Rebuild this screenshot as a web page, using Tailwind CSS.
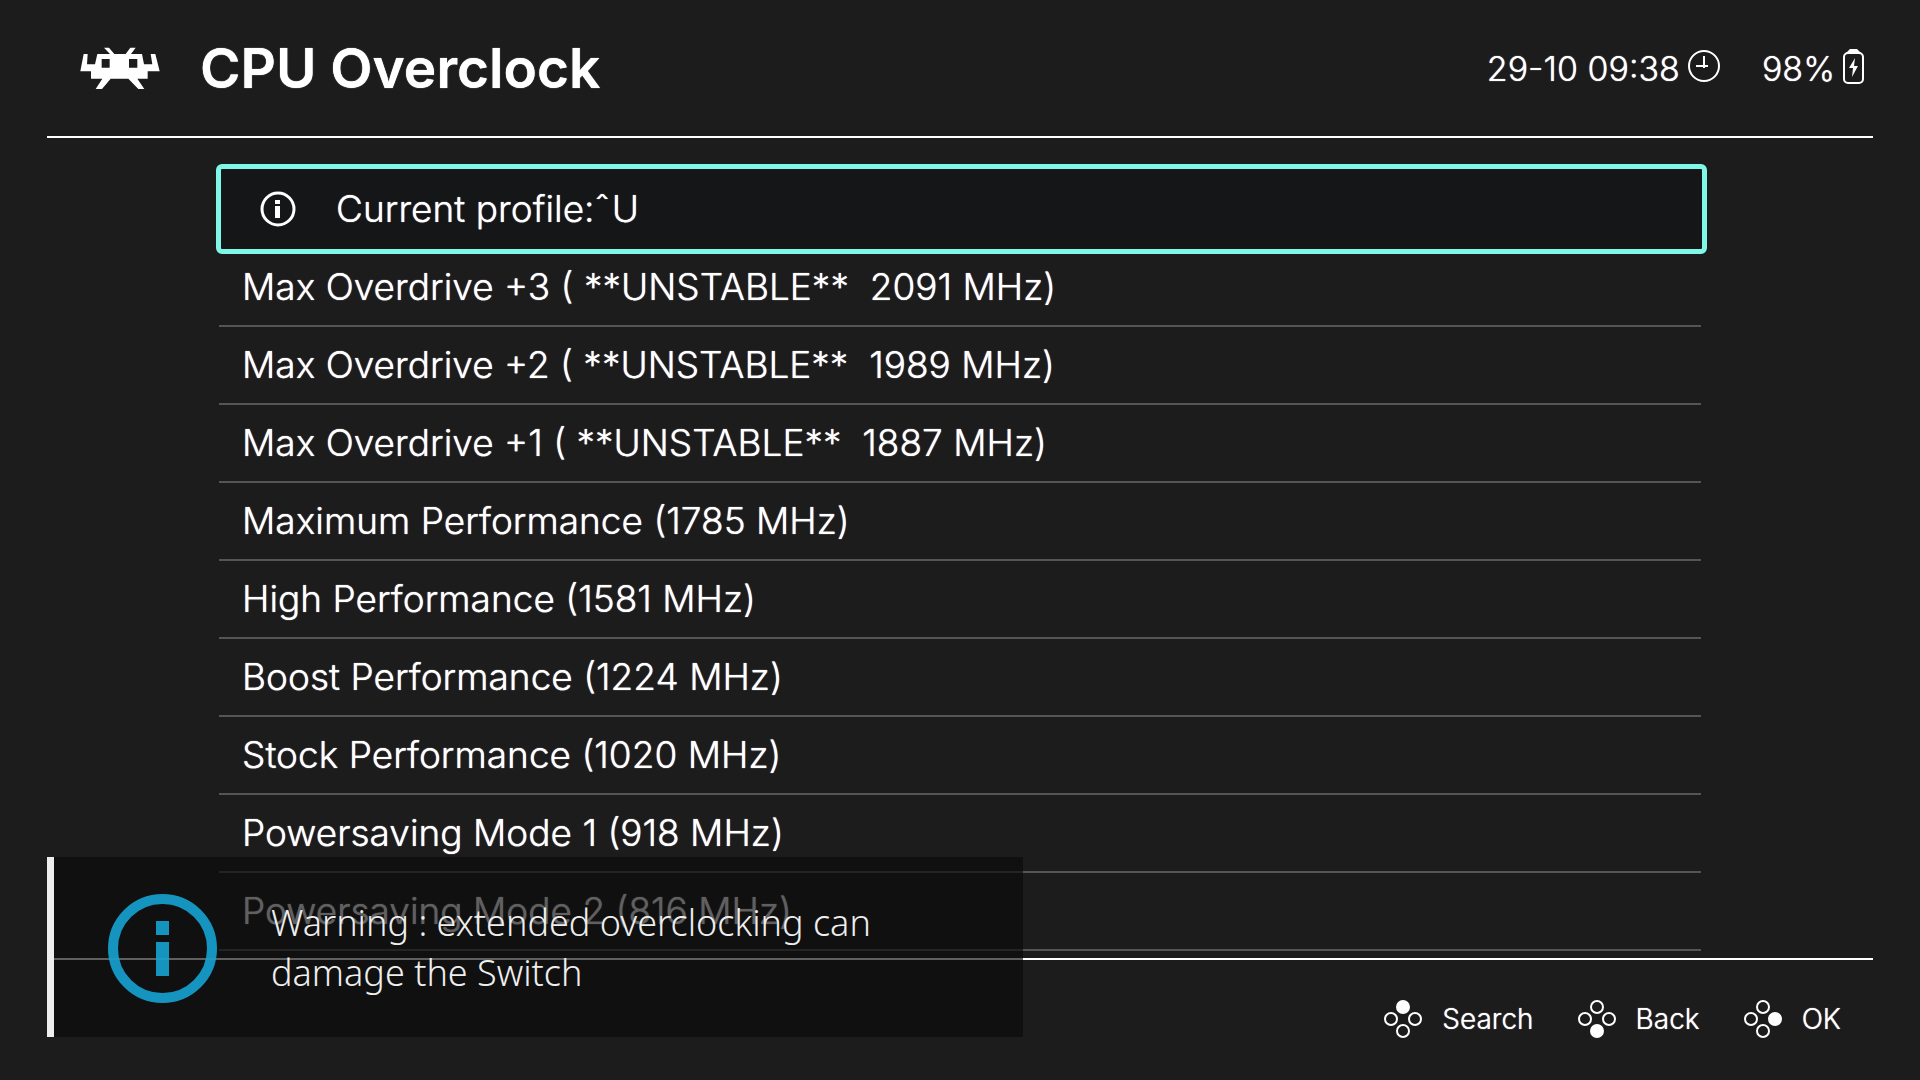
<!DOCTYPE html>
<html lang="en">
  <head>
    <meta charset="UTF-8" />
    <meta name="viewport" content="width=device-width, initial-scale=1.0" />
    <title>CPU Overclock</title>
    <script src="https://cdn.jsdelivr.net/npm/@tailwindcss/browser@4"></script>
  </head>
  <body class="bg-[#1c1c1c] font-['Inter',sans-serif] font-light text-white [text-shadow:0_0_1px_#fff] [&_button]:[text-shadow:inherit]">
    <div class="relative flex min-h-screen flex-col px-[47px]">
      <!-- Header -->
      <header class="flex h-[138px] items-center border-b-2 border-white pr-[9px] pl-[33px]">
        <svg class="h-[43px] w-20" viewBox="31 35 240 127" fill="#fff" fill-rule="evenodd" aria-hidden="true">
          <path d="M42 55H54L52 86H76L83 55H121L103 36H118L134 55H168L182 36H198L184 55H217L223 86H248L243 55H257L270 107H234V129H203L224 160H206L176 129H123L97 160H78L98 129H64V107H32ZM96 70V96H120V70ZM178 70V96H203V70Z" />
        </svg>
        <h1 class="ml-10 grow text-[55px] font-semibold">CPU Overclock</h1>
        <div class="flex items-center gap-2 text-[34px]">
          <span>29-10 09:38</span>
          <svg class="mb-1 size-8" viewBox="0 0 32 32" fill="none" stroke="#fff" stroke-width="2" aria-hidden="true">
            <circle cx="16" cy="16" r="15" />
            <path d="M16 6V18M8 16H20" />
          </svg>
          <span class="ml-[34px]">98%</span>
          <svg class="mb-1 h-9 w-[21px]" viewBox="0 0 21 36" aria-hidden="true">
            <path d="M3 5L7 1H14L18 5Z" fill="#fff" />
            <rect x="1" y="5" width="19" height="30" rx="4" fill="none" stroke="#fff" stroke-width="2" />
            <path d="M12 10L6 20H10L9 29L15 18H11Z" fill="#fff" />
          </svg>
        </div>
      </header>

      <!-- Profile list -->
      <ul class="mt-[26px] mr-[166px] ml-[169px] flex grow flex-col text-[37px]">
        <li>
          <button class="flex h-[90px] w-full items-center rounded-md border-5 border-[#80f8e8] bg-[#141618] pl-[39px] text-left">
            <svg class="size-9" viewBox="0 0 36 36" aria-hidden="true">
              <circle cx="18" cy="18" r="16" fill="none" stroke="#fff" stroke-width="3" />
              <path d="M15 9H20V13H15ZM15 15H20V27H15Z" fill="#fff" />
            </svg>
            <span class="ml-10">Current profile:&#x302;&#x2009; U</span>
          </button>
        </li>
        <li class="mr-[6px] ml-[3px] border-b-2 border-[#555]"><button class="h-[71px] w-full pb-[6px] pl-[23px] text-left whitespace-pre">Max Overdrive +3 ( **UNSTABLE**  2091 MHz)</button></li>
        <li class="mr-[6px] ml-[3px] border-b-2 border-[#555]"><button class="h-[76px] w-full pl-[23px] text-left whitespace-pre">Max Overdrive +2 ( **UNSTABLE**  1989 MHz)</button></li>
        <li class="mr-[6px] ml-[3px] border-b-2 border-[#555]"><button class="h-[76px] w-full pl-[23px] text-left whitespace-pre">Max Overdrive +1 ( **UNSTABLE**  1887 MHz)</button></li>
        <li class="mr-[6px] ml-[3px] border-b-2 border-[#555]"><button class="h-[76px] w-full pl-[23px] text-left">Maximum Performance (1785 MHz)</button></li>
        <li class="mr-[6px] ml-[3px] border-b-2 border-[#555]"><button class="h-[76px] w-full pl-[23px] text-left">High Performance (1581 MHz)</button></li>
        <li class="mr-[6px] ml-[3px] border-b-2 border-[#555]"><button class="h-[76px] w-full pl-[23px] text-left">Boost Performance (1224 MHz)</button></li>
        <li class="mr-[6px] ml-[3px] border-b-2 border-[#555]"><button class="h-[76px] w-full pl-[23px] text-left">Stock Performance (1020 MHz)</button></li>
        <li class="mr-[6px] ml-[3px] border-b-2 border-[#555]"><button class="h-[76px] w-full pl-[23px] text-left">Powersaving Mode 1 (918 MHz)</button></li>
        <li class="mr-[6px] ml-[3px] border-b-2 border-[#555]"><button class="h-[76px] w-full pl-[23px] text-left">Powersaving Mode 2 (816 MHz)</button></li>
      </ul>

      <!-- Button hints -->
      <footer class="flex h-[122px] items-center justify-end gap-11 border-t-2 border-white pr-8 pb-[2px] text-[28px]">
        <button class="flex items-center gap-5">
          <svg class="size-[38px]" viewBox="0 0 38 38" fill="none" stroke="#fff" stroke-width="2" aria-hidden="true">
            <circle cx="19" cy="7" r="6" fill="#fff" />
            <circle cx="7" cy="19" r="6" />
            <circle cx="31" cy="19" r="6" />
            <circle cx="19" cy="31" r="6" />
          </svg>
          Search
        </button>
        <button class="flex items-center gap-5">
          <svg class="size-[38px]" viewBox="0 0 38 38" fill="none" stroke="#fff" stroke-width="2" aria-hidden="true">
            <circle cx="19" cy="7" r="6" />
            <circle cx="7" cy="19" r="6" />
            <circle cx="31" cy="19" r="6" />
            <circle cx="19" cy="31" r="6" fill="#fff" />
          </svg>
          Back
        </button>
        <button class="flex items-center gap-5">
          <svg class="size-[38px]" viewBox="0 0 38 38" fill="none" stroke="#fff" stroke-width="2" aria-hidden="true">
            <circle cx="19" cy="7" r="6" />
            <circle cx="7" cy="19" r="6" />
            <circle cx="31" cy="19" r="6" fill="#fff" />
            <circle cx="19" cy="31" r="6" />
          </svg>
          OK
        </button>
      </footer>

      <!-- Notification -->
      <div role="status" class="absolute bottom-[43px] left-[47px] flex h-[180px] w-[976px] items-center [text-shadow:none]">
        <div class="h-full w-[7px] bg-[#eee]"></div>
        <div class="flex h-full grow items-center bg-[#0b0b0b]/65 pt-[2px] pl-[54px]">
          <svg class="size-[109px] opacity-90" viewBox="0 0 109 109" aria-hidden="true">
            <circle cx="54.5" cy="54.5" r="49.5" fill="none" stroke="#15a3d1" stroke-width="10" />
            <path d="M48 27H61V41H48ZM48 48H61V82H48Z" fill="#15a3d1" />
          </svg>
          <p class="ml-[54px] w-[640px] font-['Noto_Sans',sans-serif] text-4xl leading-[50px] text-[#eee]">Warning : extended overclocking can damage the Switch</p>
        </div>
      </div>
    </div>
  </body>
</html>
